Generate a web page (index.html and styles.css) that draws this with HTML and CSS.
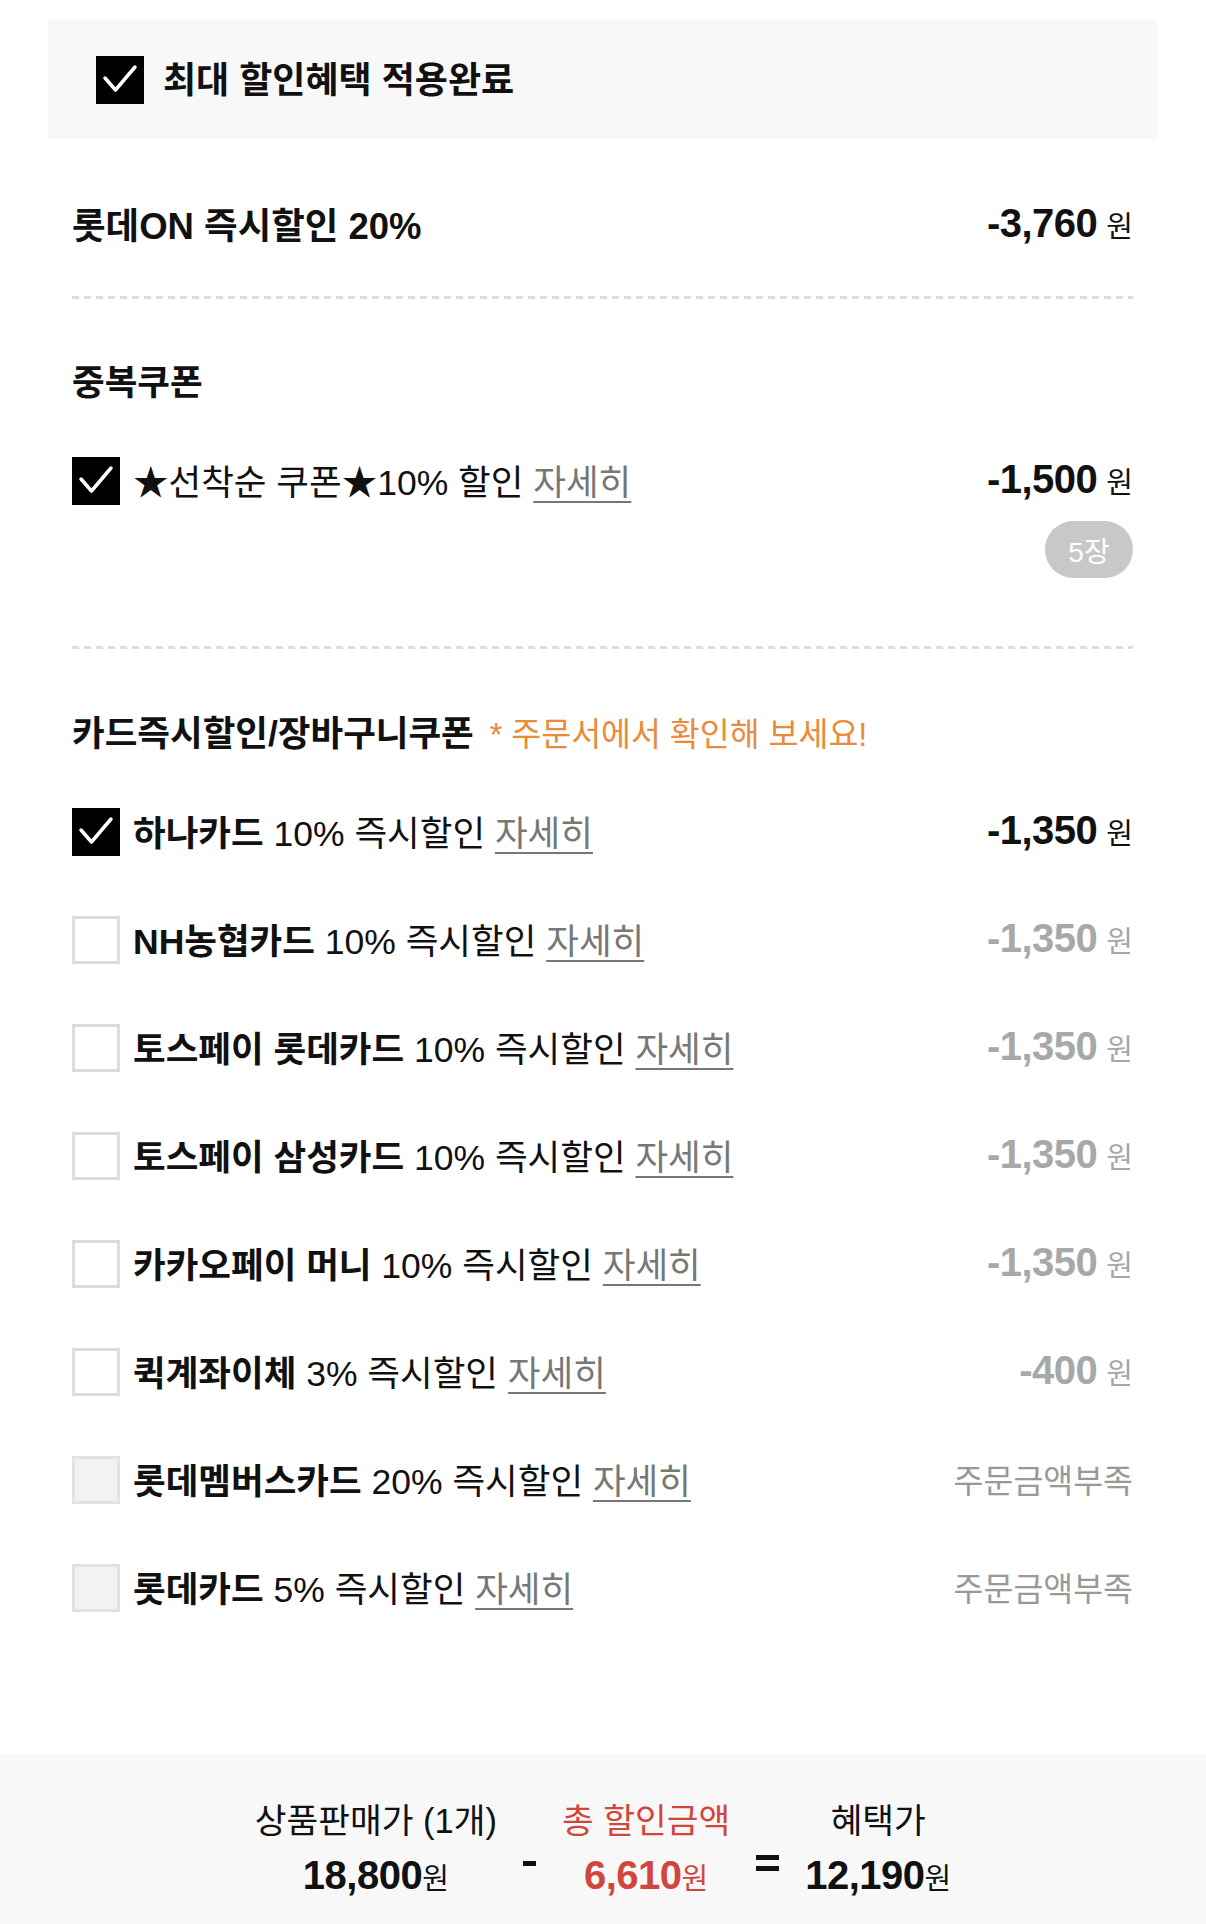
FILE: index.html
```html
<!DOCTYPE html>
<html lang="ko">
<head>
    <meta charset="UTF-8" />
    <title>할인혜택</title>
    <link rel="stylesheet" href="styles.css">
</head>
<body>
<div class="benefit">
    <div class="best">
        <span class="check on">
            <svg viewBox="0 0 48 48"><polyline points="9,22 19.5,34 39,11" /></svg>
        </span>
        <span class="best-title">최대 할인혜택 적용완료</span>
    </div>

    <div class="section instant">
        <div class="row">
            <span class="title strong">롯데ON 즉시할인 20%</span>
            <span class="amount">-3,760<small>원</small></span>
        </div>
    </div>

    <div class="divider"></div>

    <div class="section">
        <h3>중복쿠폰</h3>
        <div class="row">
            <span class="check on">
                <svg viewBox="0 0 48 48"><polyline points="9,22 19.5,34 39,11" /></svg>
            </span>
            <span class="title">★선착순 쿠폰★10% 할인 <a href="#" class="more">자세히</a></span>
            <span class="amount">-1,500<small>원</small></span>
        </div>
        <div class="count"><span class="pill">5장</span></div>
    </div>

    <div class="divider second"></div>

    <div class="section cards">
        <h3>카드즉시할인/장바구니쿠폰 <em>* 주문서에서 확인해 보세요!</em></h3>

        <div class="row">
            <span class="check on">
                <svg viewBox="0 0 48 48"><polyline points="9,22 19.5,34 39,11" /></svg>
            </span>
            <span class="title"><b>하나카드</b> 10% 즉시할인 <a href="#" class="more">자세히</a></span>
            <span class="amount">-1,350<small>원</small></span>
        </div>
        <div class="row">
            <span class="check"></span>
            <span class="title"><b>NH농협카드</b> 10% 즉시할인 <a href="#" class="more">자세히</a></span>
            <span class="amount off">-1,350<small>원</small></span>
        </div>
        <div class="row">
            <span class="check"></span>
            <span class="title"><b>토스페이 롯데카드</b> 10% 즉시할인 <a href="#" class="more">자세히</a></span>
            <span class="amount off">-1,350<small>원</small></span>
        </div>
        <div class="row">
            <span class="check"></span>
            <span class="title"><b>토스페이 삼성카드</b> 10% 즉시할인 <a href="#" class="more">자세히</a></span>
            <span class="amount off">-1,350<small>원</small></span>
        </div>
        <div class="row">
            <span class="check"></span>
            <span class="title"><b>카카오페이 머니</b> 10% 즉시할인 <a href="#" class="more">자세히</a></span>
            <span class="amount off">-1,350<small>원</small></span>
        </div>
        <div class="row">
            <span class="check"></span>
            <span class="title"><b>퀵계좌이체</b> 3% 즉시할인 <a href="#" class="more">자세히</a></span>
            <span class="amount off">-400<small>원</small></span>
        </div>
        <div class="row">
            <span class="check disabled"></span>
            <span class="title"><b>롯데멤버스카드</b> 20% 즉시할인 <a href="#" class="more">자세히</a></span>
            <span class="short">주문금액부족</span>
        </div>
        <div class="row">
            <span class="check disabled"></span>
            <span class="title"><b>롯데카드</b> 5% 즉시할인 <a href="#" class="more">자세히</a></span>
            <span class="short">주문금액부족</span>
        </div>
    </div>

    <div class="summary">
        <div class="sum-col">
            <span class="sum-label">상품판매가 (1개)</span>
            <span class="sum-value">18,800<small>원</small></span>
        </div>
        <span class="operator minus"></span>
        <div class="sum-col red">
            <span class="sum-label">총 할인금액</span>
            <span class="sum-value">6,610<small>원</small></span>
        </div>
        <span class="operator equal"></span>
        <div class="sum-col">
            <span class="sum-label">혜택가</span>
            <span class="sum-value">12,190<small>원</small></span>
        </div>
    </div>
</div>
</body>
</html>
```

FILE: styles.css
```css
body {
    margin: 0;
    padding: 0;
    background-color: #fff;
    color: #111;
    font-family: "Liberation Sans", "Noto Sans CJK KR", sans-serif;
}

.benefit {
    width: 1206px;
    padding-top: 20px;
}

.best {
    margin: 0 48px;
    height: 119px;
    padding-left: 48px;
    background-color: #f8f8f8;
    display: flex;
    align-items: center;
}

.best-title {
    margin-left: 19px;
    margin-bottom: 6px;
    font-size: 36px;
    font-weight: bold;
}

.check {
    flex: none;
    width: 48px;
    height: 48px;
    box-sizing: border-box;
    border: 3px solid #dcdcdc;
    background-color: #fff;
    display: flex;
}

.check.on {
    border: none;
    background-color: #000;
}

.check.disabled {
    background-color: #f2f2f2;
    border-color: #e2e2e2;
}

.check svg {
    width: 48px;
    height: 48px;
}

.check polyline {
    fill: none;
    stroke: #fff;
    stroke-width: 3.5;
    stroke-linecap: round;
    stroke-linejoin: round;
}

.section {
    padding: 0 73px 0 72px;
}

.instant {
    margin-top: 62px;
}

.divider {
    margin: 47px 73px 0 72px;
    height: 3px;
    background: repeating-linear-gradient(90deg, #dddddd 0 7px, transparent 7px 12px);
}

.divider.second {
    margin-top: 68px;
}

.section h3 {
    margin: 62px 0 0;
    height: 48px;
    line-height: 44px;
    font-size: 35.5px;
    font-weight: bold;
    white-space: nowrap;
}

.cards h3 {
    margin-top: 63px;
}

.section h3 em {
    margin-left: 6px;
    font-style: normal;
    font-weight: normal;
    font-size: 32.5px;
    color: #ea8a3a;
}

.row {
    height: 48px;
    display: flex;
    align-items: center;
}

.section h3 + .row {
    margin-top: 48px;
}

.cards .row + .row {
    margin-top: 60px;
}

.title {
    flex: 1;
    margin-left: 13px;
    margin-bottom: 4px;
    font-size: 35.5px;
    white-space: nowrap;
}

.title.strong {
    margin-left: 0;
    font-size: 36.5px;
    font-weight: bold;
}

.title b {
    font-weight: bold;
}

.more {
    color: #777;
    text-decoration: underline;
    text-decoration-thickness: 2px;
    text-underline-offset: 6px;
}

.amount {
    margin-bottom: 4px;
    font-size: 40px;
    font-weight: bold;
    letter-spacing: -0.5px;
    color: #111;
    white-space: nowrap;
}

.amount small {
    margin-left: 9px;
    font-size: 29px;
    font-weight: normal;
    letter-spacing: 0;
}

.amount.off {
    color: #a8a8a8;
}

.short {
    margin-bottom: 4px;
    font-size: 32.5px;
    color: #999;
}

.count {
    margin-top: 16px;
    display: flex;
    justify-content: flex-end;
}

.pill {
    width: 88px;
    height: 57px;
    border-radius: 29px;
    background-color: #c8c8c8;
    color: #fff;
    font-size: 28px;
    display: flex;
    align-items: center;
    justify-content: center;
}

.summary {
    margin-top: 142px;
    height: 170px;
    box-sizing: border-box;
    padding-top: 45px;
    background-color: #f8f8f8;
    display: flex;
    justify-content: center;
    align-items: flex-start;
    gap: 26px;
}

.sum-col {
    display: flex;
    flex-direction: column;
    align-items: center;
}

.sum-label {
    height: 44px;
    line-height: 44px;
    font-size: 34.5px;
    white-space: nowrap;
}

.sum-value {
    margin-top: 8px;
    height: 48px;
    line-height: 48px;
    font-size: 40px;
    font-weight: bold;
    letter-spacing: -0.5px;
    white-space: nowrap;
}

.sum-value small {
    font-size: 29px;
    font-weight: normal;
    letter-spacing: 0;
}

.sum-col.red {
    color: #d0463c;
}

.operator {
    flex: none;
    position: relative;
    margin-top: 56px;
    height: 16px;
}

.operator.minus {
    width: 13px;
}

.operator.minus::before {
    content: "";
    position: absolute;
    left: 0;
    top: 6px;
    width: 13px;
    height: 5px;
    background-color: #111;
}

.operator.equal {
    width: 23px;
}

.operator.equal::before,
.operator.equal::after {
    content: "";
    position: absolute;
    left: 0;
    width: 23px;
    height: 5px;
    background-color: #111;
}

.operator.equal::before {
    top: 0;
}

.operator.equal::after {
    top: 11px;
}
```
